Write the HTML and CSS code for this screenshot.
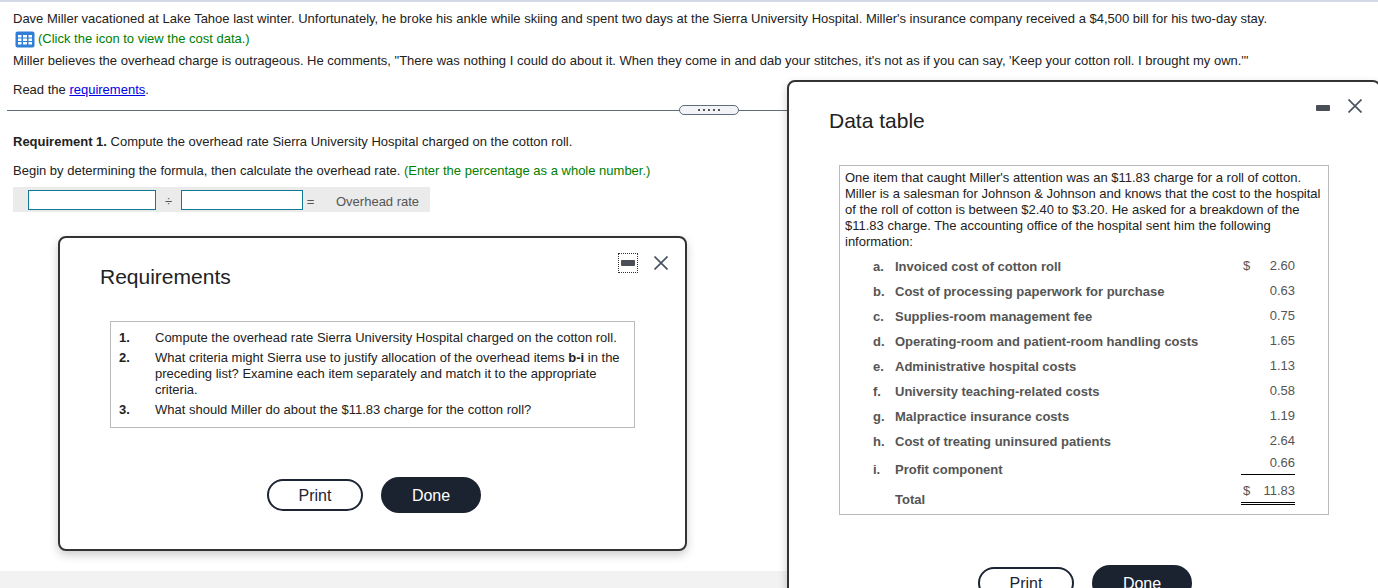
FILE: index.html
```html
<!DOCTYPE html>
<html lang="en">
<head>
    <meta charset="UTF-8">
    <title>Overhead rate</title>
    <link rel="stylesheet" href="styles.css">
</head>
<body>
    <div class="question">
        <p class="intro">Dave Miller vacationed at Lake Tahoe last winter. Unfortunately, he broke his ankle while skiing and spent two days at the Sierra University Hospital. Miller's insurance company received a $4,500 bill for his two-day stay.</p>
        <p class="cost-link">
            <svg class="grid-icon" width="20" height="17" viewBox="0 0 20 17">
                <rect width="19" height="16" x="0.5" y="0.5" rx="2" fill="#2f7fd6"/>
                <path d="M3 4h3.500v2.500H3zM8 4h4v2.500H8zM13.500 4H17v2.500h-3.500zM3 7.500h3.500V10H3zM8 7.500h4V10H8zM13.500 7.500H17V10h-3.500zM3 11h3.500v2.500H3zM8 11h4v2.500H8zM13.500 11H17v2.500h-3.500z" fill="#fff"/>
            </svg>
            <span class="green">(Click the icon to view the cost data.)</span>
        </p>
        <p class="comment">Miller believes the overhead charge is outrageous. He comments, "There was nothing I could do about it. When they come in and dab your stitches, it's not as if you can say, 'Keep your cotton roll. I brought my own.'"</p>
        <p class="read">Read the <a href="#">requirements</a>.</p>
        <div class="divider">
            <div class="handle"><i></i><i></i><i></i><i></i><i></i></div>
        </div>
        <p class="req-title"><b>Requirement 1.</b> Compute the overhead rate Sierra University Hospital charged on the cotton roll.</p>
        <p class="begin">Begin by determining the formula, then calculate the overhead rate. <span class="green">(Enter the percentage as a whole number.)</span></p>
        <div class="formula">
            <input class="box box-a" type="text">
            <span class="op">÷</span>
            <input class="box box-b" type="text">
            <span class="eq">=</span>
            <span class="result">Overhead rate</span>
        </div>
    </div>
    <div class="footer-band"></div>

    <div class="dialog req-dialog">
        <div class="win-controls">
            <span class="min-focus"><span class="min-bar"></span></span>
            <svg class="close" width="14" height="14" viewBox="0 0 14 14"><path d="M.5.5l13 13M13.500.5l-13 13" stroke="#4a5563" stroke-width="1.700" fill="none"/></svg>
        </div>
        <h2>Requirements</h2>
        <ol class="req-list">
            <li><b>1.</b><span>Compute the overhead rate Sierra University Hospital charged on the cotton roll.</span></li>
            <li><b>2.</b><span>What criteria might Sierra use to justify allocation of the overhead items <strong>b-i</strong> in the preceding list? Examine each item separately and match it to the appropriate criteria.</span></li>
            <li><b>3.</b><span>What should Miller do about the $11.83 charge for the cotton roll?</span></li>
        </ol>
        <div class="buttons">
            <button class="btn-print">Print</button>
            <button class="btn-done">Done</button>
        </div>
    </div>

    <div class="dialog data-dialog">
        <div class="win-controls">
            <span class="min-bar"></span>
            <svg class="close" width="14" height="14" viewBox="0 0 14 14"><path d="M.5.5l13 13M13.500.5l-13 13" stroke="#4a5563" stroke-width="1.700" fill="none"/></svg>
        </div>
        <h2>Data table</h2>
        <div class="data-box">
            <p>One item that caught Miller's attention was an $11.83 charge for a roll of cotton. Miller is a salesman for Johnson &amp; Johnson and knows that the cost to the hospital of the roll of cotton is between $2.40 to $3.20. He asked for a breakdown of the $11.83 charge. The accounting office of the hospital sent him the following information:</p>
            <table class="costs">
                <tr><td class="ltr">a.</td><td class="lbl">Invoiced cost of cotton roll</td><td class="amt"><div class="fig"><span>$</span><span>2.60</span></div></td></tr>
                <tr><td class="ltr">b.</td><td class="lbl">Cost of processing paperwork for purchase</td><td class="amt"><div class="fig"><span></span><span>0.63</span></div></td></tr>
                <tr><td class="ltr">c.</td><td class="lbl">Supplies-room management fee</td><td class="amt"><div class="fig"><span></span><span>0.75</span></div></td></tr>
                <tr><td class="ltr">d.</td><td class="lbl">Operating-room and patient-room handling costs</td><td class="amt"><div class="fig"><span></span><span>1.65</span></div></td></tr>
                <tr><td class="ltr">e.</td><td class="lbl">Administrative hospital costs</td><td class="amt"><div class="fig"><span></span><span>1.13</span></div></td></tr>
                <tr><td class="ltr">f.</td><td class="lbl">University teaching-related costs</td><td class="amt"><div class="fig"><span></span><span>0.58</span></div></td></tr>
                <tr><td class="ltr">g.</td><td class="lbl">Malpractice insurance costs</td><td class="amt"><div class="fig"><span></span><span>1.19</span></div></td></tr>
                <tr><td class="ltr">h.</td><td class="lbl">Cost of treating uninsured patients</td><td class="amt"><div class="fig"><span></span><span>2.64</span></div></td></tr>
                <tr class="profit"><td class="ltr">i.</td><td class="lbl">Profit component</td><td class="amt"><div class="fig"><span></span><span>0.66</span></div></td></tr>
                <tr class="total"><td class="ltr"></td><td class="lbl">Total</td><td class="amt"><div class="fig"><span>$</span><span>11.83</span></div></td></tr>
            </table>
        </div>
        <div class="buttons">
            <button class="btn-print">Print</button>
            <button class="btn-done">Done</button>
        </div>
    </div>
</body>
</html>
```

FILE: styles.css
```css
body {
    margin: 0;
    position: relative;
    height: 588px;
    overflow: hidden;
    background: #fff;
    font-family: "Liberation Sans", Arial, sans-serif;
    font-size: 13px;
    color: #222;
    border-top: 2px solid #d3d9e6;
    box-sizing: border-box;
}

p {
    margin: 0;
}

.question {
    padding: 9px 0 0 13px;
    line-height: 16px;
}

.green {
    color: #008000;
}

.cost-link {
    display: flex;
    align-items: center;
    gap: 3px;
    margin: 3px 0 0 2px;
    height: 18px;
}

.comment {
    margin-top: 5px;
}

.read {
    margin-top: 13px;
}

.read a {
    color: #0000e6;
}

.divider {
    position: relative;
    margin: 12px 0 0 -6px;
    height: 1px;
    background: #5f6d7a;
    width: 790px;
}

.handle {
    position: absolute;
    left: 672px;
    top: -5px;
    box-sizing: border-box;
    display: flex;
    align-items: center;
    justify-content: center;
    gap: 3px;
    width: 60px;
    height: 10px;
    border: 1px solid #5f6d7a;
    border-radius: 6px;
    background: #f1f3f7;
}

.handle i {
    width: 2px;
    height: 2px;
    background: #555;
}

.req-title {
    margin-top: 23px;
}

.begin {
    margin-top: 13px;
}

.formula {
    display: flex;
    align-items: center;
    width: 417px;
    height: 25px;
    margin-top: 8px;
    background: #ebebeb;
    color: #555;
}

.box {
    box-sizing: border-box;
    height: 20px;
    padding: 0;
    border: 1px solid #0e7a94;
    background: #fff;
}

.box-a {
    width: 128px;
    margin-left: 15px;
}

.op {
    width: 25px;
    text-align: center;
    padding-top: 4px;
}

.box-b {
    width: 122px;
}

.eq {
    width: 15px;
    text-align: center;
    padding-top: 4px;
}

.result {
    margin-left: 18px;
    padding-top: 4px;
}

.footer-band {
    position: absolute;
    left: 0;
    right: 0;
    top: 569px;
    height: 20px;
    background: #f2f2f2;
}

.dialog {
    position: absolute;
    box-sizing: border-box;
    background: #fff;
    border: 2px solid #333;
    border-radius: 8px;
    box-shadow: 0 4px 10px rgba(0, 0, 0, 0.2);
}

.dialog h2 {
    margin: 0;
    font-size: 21px;
    font-weight: normal;
    line-height: 24px;
    color: #222;
}

.req-dialog {
    left: 58px;
    top: 234px;
    width: 629px;
    height: 315px;
    padding: 27px 40px 0 40px;
}

.data-dialog {
    left: 787px;
    top: 78px;
    width: 594px;
    height: 540px;
    padding: 27px 0 0 40px;
}

.win-controls {
    position: absolute;
    display: flex;
    align-items: center;
    right: 17px;
}

.req-dialog .win-controls {
    top: 15px;
    gap: 16px;
}

.data-dialog .win-controls {
    top: 17px;
    gap: 18px;
}

.data-dialog .min-bar {
    margin-top: 4px;
}

.min-focus {
    box-sizing: border-box;
    display: flex;
    align-items: center;
    justify-content: center;
    width: 20px;
    height: 20px;
    border: 1px dotted #333;
}

.min-bar {
    display: block;
    width: 14px;
    height: 6px;
    border-radius: 1px;
    background: #4a4f57;
}

.req-list {
    list-style: none;
    margin: 32px 0 0 10px;
    padding: 8px 8px 6px 8px;
    width: 525px;
    box-sizing: border-box;
    border: 1px solid #bbb;
    line-height: 16px;
}

.req-list li {
    display: flex;
    margin-bottom: 4px;
}

.req-list li:last-child {
    margin-bottom: 3px;
}

.req-list li b {
    flex: 0 0 36px;
}

.buttons {
    display: flex;
    justify-content: center;
    align-items: center;
    gap: 18px;
}

.req-dialog .buttons {
    margin: 49px -40px 0;
    padding-left: 3px;
}

.data-dialog .buttons {
    width: 490px;
    margin: 50px 0 0 11px;
}

button {
    font-family: "Liberation Sans", Arial, sans-serif;
    font-size: 16px;
    padding: 2px 0 0;
    border-radius: 18px;
    cursor: pointer;
}

.btn-print {
    width: 96px;
    height: 32px;
    background: #fff;
    color: #1d2433;
    border: 2px solid #1d2433;
}

.btn-done {
    width: 100px;
    height: 36px;
    background: #1c2330;
    color: #fff;
    border: none;
}

.data-box {
    box-sizing: border-box;
    width: 490px;
    height: 350px;
    margin: 32px 0 0 10px;
    padding: 4px 5px 0 5px;
    border: 1px solid #bbb;
    line-height: 16px;
}

.costs {
    border-collapse: collapse;
    margin: 4px 0 0 28px;
    width: 422px;
    color: #555;
}

.costs td {
    padding: 0;
    height: 25px;
}

.ltr {
    width: 22px;
    font-weight: bold;
}

.lbl {
    font-weight: bold;
}

.amt {
    width: 54px;
}

.fig {
    display: flex;
    justify-content: space-between;
    padding-bottom: 2px;
}

.fig span:first-child {
    margin-left: 2px;
}

.costs .profit td,
.costs .total td {
    height: 20px;
    vertical-align: top;
}

.costs .profit .ltr,
.costs .profit .lbl {
    padding-top: 8px;
}

.profit .fig {
    padding: 1px 0 3px;
    border-bottom: 1px solid #000;
}

.costs .total .lbl {
    padding-top: 10px;
}

.total .fig {
    padding: 1px 0 3px;
    border-bottom: 3px double #000;
}
```
